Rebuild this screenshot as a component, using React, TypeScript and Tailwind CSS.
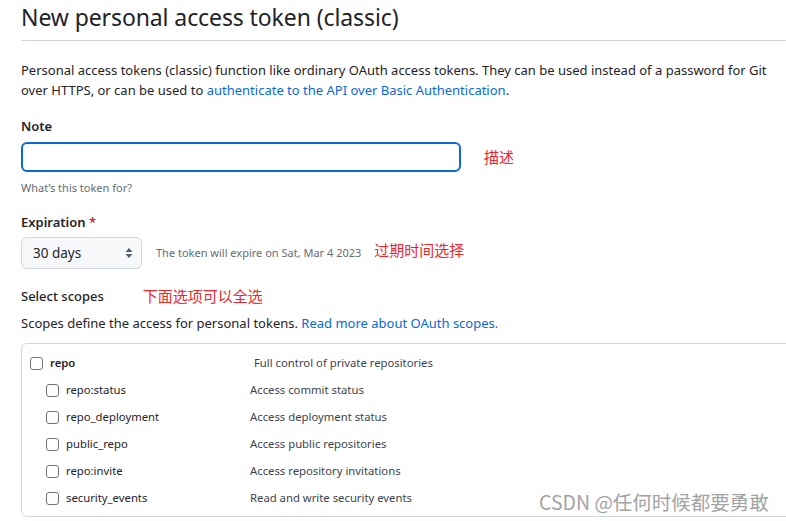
import React from 'react';

const font = { fontFamily: '"Noto Sans", "Noto Sans CJK SC", sans-serif' };

interface Scope {
    name: string;
    desc: string;
}

const subScopes: Scope[] = [
    { name: 'repo:status', desc: 'Access commit status' },
    { name: 'repo_deployment', desc: 'Access deployment status' },
    { name: 'public_repo', desc: 'Access public repositories' },
    { name: 'repo:invite', desc: 'Access repository invitations' },
    { name: 'security_events', desc: 'Read and write security events' },
];

const Box: React.FC = () => (
    <span className="inline-block w-[13px] h-[13px] border border-[#6e7781] rounded-[3px] bg-white shrink-0" />
);

const Note: React.FC<{ children: React.ReactNode; className?: string }> = ({ children, className }) => (
    <span className={`text-[#f0262b] text-[15px] leading-[20px] font-['Noto_Sans_CJK_SC',sans-serif] ${className ?? ''}`}>{children}</span>
);

const App: React.FC = () => {
    return (
        <div className="w-[786px] h-[521px] overflow-hidden bg-white text-[#1f2328] relative" style={font}>
            <div className="pl-[21px]">
                {/* Header */}
                <h1 className="text-[23px] leading-[32px] pt-[1px] pb-[7px] border-b border-[#d0d7de] font-normal tracking-[-0.1px]">
                    New personal access token (classic)
                </h1>

                <p className="mt-[19px] text-[13px] leading-[20px] pr-[6px]">
                    Personal access tokens (classic) function like ordinary OAuth access tokens. They can be used instead of a password for Git
                    over HTTPS, or can be used to <a className="text-[#0969da]">authenticate to the API over Basic Authentication</a>.
                </p>

                {/* Note */}
                <div className="mt-[16px] text-[13px] font-semibold leading-[20px]">Note</div>
                <div className="mt-[6px] flex items-center">
                    <div className="w-[440px] h-[30px] rounded-[6px] border-2 border-[#0969da] bg-white" />
                    <Note className="ml-[23px]">描述</Note>
                </div>
                <div className="mt-[7px] text-[11px] leading-[18px] text-[#656d76]">What’s this token for?</div>

                {/* Expiration */}
                <div className="mt-[15px] text-[13px] font-semibold leading-[20px]">
                    Expiration <span className="text-[#cf222e]">*</span>
                </div>
                <div className="mt-[5px] flex items-center">
                    <div className="w-[121px] h-[32px] rounded-[6px] border border-[#d0d7de] bg-[#f6f8fa] flex items-center justify-between pl-[11px] pr-[8px]">
                        <span className="text-[13.5px]">30 days</span>
                        <svg width="8" height="12" viewBox="0 0 8 12">
                            <path d="M4 1 L7.5 5 H0.5 Z" fill="#57606a" />
                            <path d="M4 11 L7.5 7 H0.5 Z" fill="#57606a" />
                        </svg>
                    </div>
                    <span className="ml-[14px] text-[11px] text-[#656d76]">The token will expire on Sat, Mar 4 2023</span>
                    <Note className="ml-[13px] -mt-[6px]">过期时间选择</Note>
                </div>

                {/* Scopes */}
                <div className="mt-[17px] flex items-center h-[20px]">
                    <span className="text-[13px] font-medium leading-[20px]">Select scopes</span>
                    <Note className="ml-[39px]">下面选项可以全选</Note>
                </div>
                <p className="mt-[7px] text-[13px] leading-[20px]">
                    Scopes define the access for personal tokens.{' '}
                    <a className="text-[#0969da]">Read more about OAuth scopes.</a>
                </p>

                <div className="mt-[10px] w-[800px] border border-[#d0d7de] rounded-l-[6px] pt-[10px] pb-[9px]">
                    <div className="flex items-center h-[18px]">
                        <div className="w-[232px] flex items-center pl-[8px] gap-[7px]">
                            <Box />
                            <span className="text-[11.3px] font-semibold">repo</span>
                        </div>
                        <span className="text-[11.3px] text-[#3d444d]">Full control of private repositories</span>
                    </div>
                    {subScopes.map((s) => (
                        <div key={s.name} className="flex items-center h-[18px] mt-[9px]">
                            <div className="w-[232px] flex items-center pl-[24px] gap-[7px]">
                                <Box />
                                <span className="text-[11.3px]">{s.name}</span>
                            </div>
                            <span className="text-[11.3px] text-[#3d444d] -ml-[4px]">{s.desc}</span>
                        </div>
                    ))}
                </div>
            </div>

            {/* Watermark */}
            <div className="absolute left-[539px] top-[487px] text-[19.5px] text-[#a3a3a3] font-['Noto_Sans_CJK_SC',sans-serif]">
                CSDN @任何时候都要勇敢
            </div>
        </div>
    );
};

export default App;
